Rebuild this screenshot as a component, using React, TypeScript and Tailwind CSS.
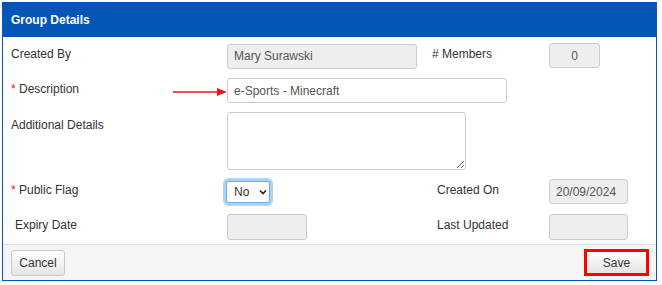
import React from "react";

const lbl = "w-[216px] shrink-0 pt-[4px] text-[12px] leading-[14px] text-[#333]";
const inputBase =
  "h-[25px] border border-[#ccc] rounded-[3px] px-[6px] text-[12px] text-[#555] outline-none";

function Req({ children }: { children: React.ReactNode }) {
  return (
    <span>
      <span className="text-[#e31b1b]">*</span> {children}
    </span>
  );
}

export default function App() {
  return (
    <div className="w-[662px] h-[285px] bg-white pl-[2px] pt-[2px] font-['Liberation_Sans',Arial,sans-serif]">
      <div className="w-[655px] h-[279px] border border-[#0455b5] flex flex-col bg-white">
        <div className="h-[34px] bg-[#0455b5] flex items-center pl-[8px] text-white font-bold text-[12px] leading-[14px]">
          Group Details
        </div>
        <div className="h-[207px] px-[8px] pt-[6px] flex flex-col">
          {/* Row 1 */}
          <div className="flex h-[25px]">
            <div className={lbl}>Created By</div>
            <div className="w-[205px] shrink-0">
              <input
                readOnly
                value="Mary Surawski"
                className={`${inputBase} w-[190px] bg-[#eee]`}
              />
            </div>
            <div className="w-[117px] shrink-0 pt-[4px] text-[12px] leading-[14px] text-[#333]">
              # Members
            </div>
            <input
              readOnly
              value="0"
              className={`${inputBase} w-[51px] bg-[#eee] text-center`}
            />
          </div>
          {/* Row 2 */}
          <div className="flex h-[25px] mt-[10px]">
            <div className={`${lbl} relative`}>
              <Req>Description</Req>
              <svg
                className="absolute left-[162px] top-[9px]"
                width="54"
                height="10"
                viewBox="0 0 54 10"
              >
                <line x1="0" y1="5" x2="46" y2="5" stroke="#e8141b" strokeWidth="1.5" />
                <polygon points="44,1 54,5 44,9" fill="#e8141b" />
              </svg>
            </div>
            <input
              readOnly
              value="e-Sports - Minecraft"
              className={`${inputBase} w-[280px] bg-white text-[#333]`}
            />
          </div>
          {/* Row 3 */}
          <div className="flex h-[58px] mt-[9px]">
            <div className={`${lbl} pt-[6px]`}>Additional Details</div>
            <textarea
              readOnly
              className="w-[239px] h-[58px] border border-[#ccc] rounded-[3px] bg-white outline-none"
            />
          </div>
          {/* Row 4 */}
          <div className="flex h-[25px] mt-[9px]">
            <div className={lbl}>
              <Req>Public Flag</Req>
            </div>
            <div className="w-[205px] shrink-0">
              <div className="-ml-[1px] mt-[2px] w-[44px] h-[22px] border border-[#66afe9] rounded-[3px] bg-white shadow-[0_0_0_3px_rgba(102,175,233,0.55)] flex items-center pl-[7px] text-[12px] text-[#333]">
                <span>No</span>
                <svg className="ml-[10px]" width="8" height="6" viewBox="0 0 8 6">
                  <polyline
                    points="1,1.5 4,4.5 7,1.5"
                    fill="none"
                    stroke="#222"
                    strokeWidth="1.6"
                  />
                </svg>
              </div>
            </div>
            <div className="w-[117px] shrink-0 pt-[4px] pl-[5px] text-[12px] leading-[14px] text-[#333]">
              Created On
            </div>
            <input
              readOnly
              value="20/09/2024"
              className={`${inputBase} w-[79px] bg-[#eee] px-[4px]`}
            />
          </div>
          {/* Row 5 */}
          <div className="flex h-[26px] mt-[10px]">
            <div className={`${lbl} pl-[4px]`}>Expiry Date</div>
            <div className="w-[205px] shrink-0">
              <input readOnly value="" className={`${inputBase} h-[26px] w-[80px] bg-[#eee]`} />
            </div>
            <div className="w-[117px] shrink-0 pt-[4px] pl-[5px] text-[12px] leading-[14px] text-[#333]">
              Last Updated
            </div>
            <input readOnly value="" className={`${inputBase} h-[26px] w-[79px] bg-[#eee]`} />
          </div>
        </div>
        <div className="h-[36px] border-t border-[#ddd] bg-[#f5f5f5] flex items-center justify-between pl-[8px] pr-[7px]">
          <button className="w-[54px] h-[26px] border border-[#c8c8c8] rounded-[3px] bg-gradient-to-b from-white to-[#e4e4e4] text-[12px] text-[#333]">
            Cancel
          </button>
          <button className="w-[65px] h-[27px] border-[3px] border-[#f00] bg-gradient-to-b from-white to-[#e4e4e4] text-[12px] text-[#333]">
            Save
          </button>
        </div>
      </div>
    </div>
  );
}
